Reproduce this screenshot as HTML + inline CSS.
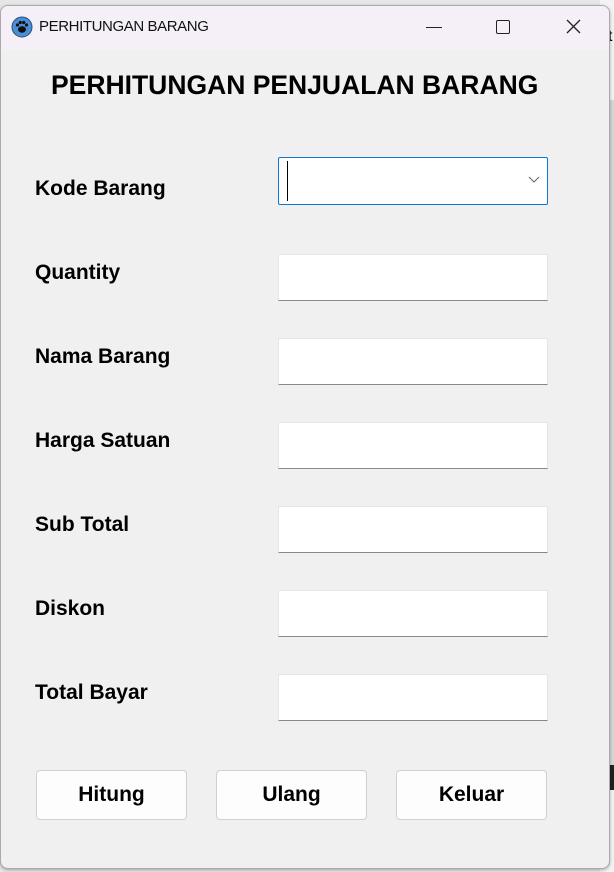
<!DOCTYPE html>
<html><head><style>
body{margin:0;width:614px;height:872px;background:#e6e6e6;position:relative;overflow:hidden;font-family:"Liberation Sans",sans-serif}
.outside{position:absolute;left:600px;top:0;width:14px;height:872px;background:#f3f3f3}
.win{position:absolute;left:0;top:5px;width:608px;height:862px;background:#f0f0f0;border:1px solid #aaa;border-radius:8px;overflow:hidden;box-shadow:0 1px 3px rgba(0,0,0,.3)}
.tb{height:44px;background:#f5eff7;position:relative}
.tb .t{position:absolute;left:38px;top:12px;font-size:15px;letter-spacing:-0.4px;color:#111}
.h{position:absolute;left:50px;top:64px;font-weight:bold;font-size:26.5px;color:#000;white-space:nowrap}
.l{position:absolute;left:35px;font-size:21px;font-weight:bold;color:#000}
.in{position:absolute;left:278px;width:270px;height:47px;background:#fff;border:1px solid #e6e6e6;border-bottom:1.5px solid #888;box-sizing:border-box}
.b{position:absolute;top:765px;width:151px;height:50px;background:#fdfdfd;border:1px solid #d0d0d0;border-radius:4px;box-sizing:border-box;text-align:center;line-height:48px;font-weight:bold;font-size:21px}
</style></head><body>
<div class="outside"></div>
<div style="position:absolute;left:608px;top:100px;width:6px;height:690px;background:#d6d6d6"></div>
<div style="position:absolute;left:608px;top:765px;width:6px;height:25px;background:#222"></div>
<div style="position:absolute;left:608px;top:28px;font-size:16px">t</div>
<div class="win">
<div class="tb">
<svg style="position:absolute;left:10px;top:10px" width="22" height="22" viewBox="0 0 22 22"><circle cx="11" cy="11" r="10" fill="#4a8fd6" stroke="#2a4f7a"/><ellipse cx="11" cy="13.5" rx="4" ry="3.2" fill="#111"/><circle cx="6.5" cy="9" r="1.6" fill="#111"/><circle cx="9.3" cy="6.5" r="1.6" fill="#111"/><circle cx="12.7" cy="6.5" r="1.6" fill="#111"/><circle cx="15.5" cy="9" r="1.6" fill="#111"/></svg>
<div class="t">PERHITUNGAN BARANG</div>
<div style="position:absolute;left:425px;top:21px;width:16px;height:1px;background:#222"></div>
<div style="position:absolute;left:495px;top:14px;width:12px;height:12px;border:1.3px solid #222;border-radius:2px"></div>
<svg style="position:absolute;left:565px;top:13px" width="15" height="15"><path d="M1 1L14 14M14 1L1 14" stroke="#222" stroke-width="1.3"/></svg>
</div>
<div class="h">PERHITUNGAN PENJUALAN BARANG</div>
</div>
<div class="l" style="top:177px">Kode Barang</div>
<div class="l" style="top:261px">Quantity</div>
<div class="l" style="top:345px">Nama Barang</div>
<div class="l" style="top:429px">Harga Satuan</div>
<div class="l" style="top:513px">Sub Total</div>
<div class="l" style="top:597px">Diskon</div>
<div class="l" style="top:681px">Total Bayar</div>
<div class="in" style="top:157px;height:48px;border:1px solid #0a78d4;border-radius:2px"><div style="position:absolute;left:8px;top:3px;width:1px;height:40px;background:#000"></div><svg style="position:absolute;right:7px;top:18px" width="12" height="8"><path d="M1 1L6 6L11 1" stroke="#666" fill="none"/></svg></div>
<div class="in" style="top:254px"></div>
<div class="in" style="top:338px"></div>
<div class="in" style="top:422px"></div>
<div class="in" style="top:506px"></div>
<div class="in" style="top:590px"></div>
<div class="in" style="top:674px"></div>
<div class="b" style="left:36px;top:770px">Hitung</div>
<div class="b" style="left:216px;top:770px">Ulang</div>
<div class="b" style="left:396px;top:770px">Keluar</div>
</body></html>
